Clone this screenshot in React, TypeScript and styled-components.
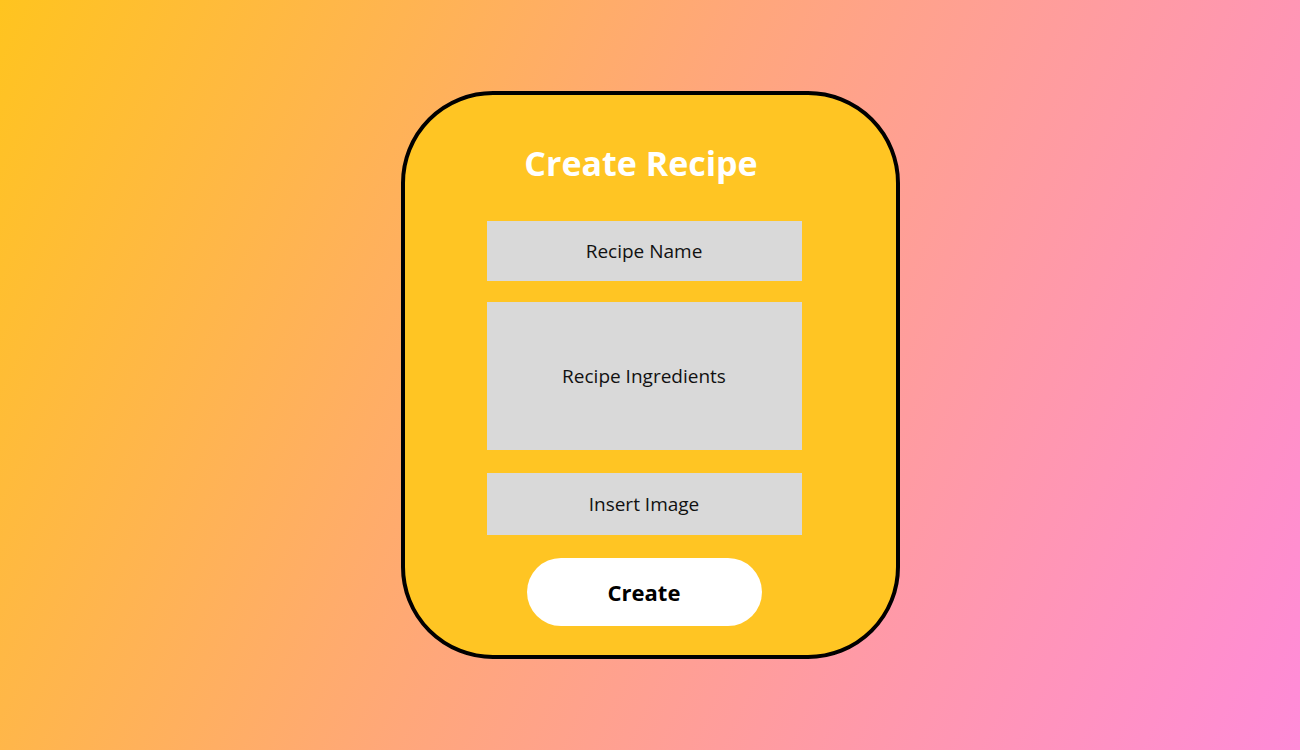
import React from 'react';
import styled, { createGlobalStyle } from 'styled-components';

const GlobalStyle = createGlobalStyle`
  html, body {
    margin: 0;
    padding: 0;
  }
  body {
    font-family: "Open Sans", "Liberation Sans", sans-serif;
  }
  * {
    box-sizing: border-box;
  }
`;

const Page = styled.div`
  width: 100%;
  height: 100vh;
  display: flex;
  align-items: center;
  justify-content: center;
  background: linear-gradient(115deg, #ffc41f 0%, #ffa77a 45%, #ff8bd9 100%);
`;

const Card = styled.div`
  width: 499px;
  height: 568px;
  background-color: #ffc523;
  border: 4px solid #000;
  border-radius: 92px;
  padding: 46px 94px 0 82px;
  display: flex;
  flex-direction: column;
  align-items: center;
`;

const Title = styled.h1`
  margin: 0 0 36px 0;
  color: #fff;
  font-size: 34px;
  line-height: 44px;
  font-weight: 700;
  text-align: center;
  transform: translateX(-3px);
`;

const Field = styled.div<{ $height: number; $gap: number }>`
  width: 100%;
  height: ${props => props.$height}px;
  margin-bottom: ${props => props.$gap}px;
  background-color: #d9d9d9;
  color: #111;
  font-size: 19px;
  display: flex;
  align-items: center;
  justify-content: center;
`;

const CreateButton = styled.button`
  width: 235px;
  height: 68px;
  border: none;
  border-radius: 34px;
  background-color: #fff;
  color: #000;
  font-family: inherit;
  font-size: 22px;
  font-weight: 700;
  cursor: pointer;
`;

const App: React.FC = () => {
  return (
    <>
      <GlobalStyle />
      <Page>
        <Card>
          <Title>Create Recipe</Title>
          <Field $height={60} $gap={21}>Recipe Name</Field>
          <Field $height={148} $gap={23}>Recipe Ingredients</Field>
          <Field $height={62} $gap={23}>Insert Image</Field>
          <CreateButton>Create</CreateButton>
        </Card>
      </Page>
    </>
  );
};

export default App;
